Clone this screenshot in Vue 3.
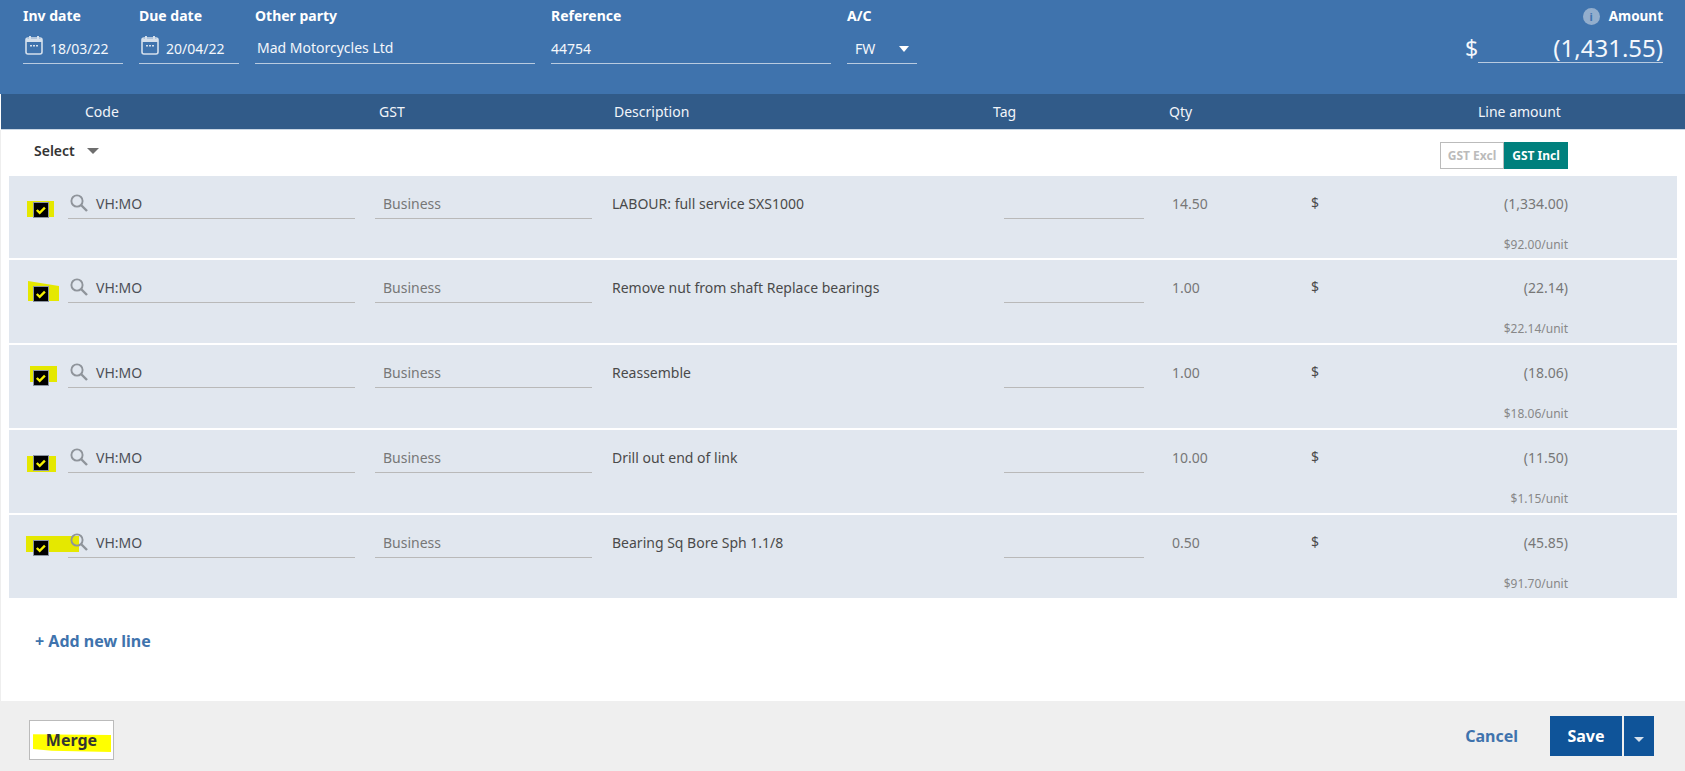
<template>
  <div class="page">
    <header class="top-bar">
      <div class="field date">
        <label>Inv date</label>
        <div class="input">
          <svg class="cal" viewBox="0 0 18 20" width="18" height="20"><path d="M3 3h12a2 2 0 0 1 2 2v12a2 2 0 0 1-2 2H3a2 2 0 0 1-2-2V5a2 2 0 0 1 2-2z" fill="none" stroke="#d5e0ec" stroke-width="1.6"/><path d="M1 4h16v3H1zM4 1h2v4H4zM12 1h2v4h-2z" fill="#d5e0ec"/><path d="M5 10h2v1.5H5zM8 10h2v1.5H8zM11 10h2v1.5h-2z" fill="#d5e0ec"/></svg>
          <span>18/03/22</span>
        </div>
      </div>
      <div class="field date">
        <label>Due date</label>
        <div class="input">
          <svg class="cal" viewBox="0 0 18 20" width="18" height="20"><path d="M3 3h12a2 2 0 0 1 2 2v12a2 2 0 0 1-2 2H3a2 2 0 0 1-2-2V5a2 2 0 0 1 2-2z" fill="none" stroke="#d5e0ec" stroke-width="1.6"/><path d="M1 4h16v3H1zM4 1h2v4H4zM12 1h2v4h-2z" fill="#d5e0ec"/><path d="M5 10h2v1.5H5zM8 10h2v1.5H8zM11 10h2v1.5h-2z" fill="#d5e0ec"/></svg>
          <span>20/04/22</span>
        </div>
      </div>
      <div class="field wide">
        <label>Other party</label>
        <div class="input"><span class="pad">Mad Motorcycles Ltd</span></div>
      </div>
      <div class="field wide">
        <label>Reference</label>
        <div class="input"><span>44754</span></div>
      </div>
      <div class="field ac">
        <label>A/C</label>
        <div class="input ac-input"><span>FW</span><i class="caret white"></i></div>
      </div>
      <div class="amount-field">
        <div class="amount-label"><span class="info">i</span>Amount</div>
        <div class="amount-line">
          <span class="dollar">$</span>
          <span class="amount-value">(1,431.55)</span>
        </div>
      </div>
    </header>

    <div class="col-head">
      <span>Code</span>
      <span>GST</span>
      <span>Description</span>
      <span>Tag</span>
      <span>Qty</span>
      <span class="head-amount">Line amount</span>
    </div>

    <main class="body">
      <div class="tools">
        <div class="select">Select <i class="caret grey"></i></div>
        <div class="gst-toggle">
          <span class="excl">GST Excl</span>
          <span class="incl">GST Incl</span>
        </div>
      </div>

      <div class="rows">
        <div v-for="(line, i) in lines" :key="i" class="row">
          <div class="check-cell">
            <span class="mark" :class="`mark-${i}`"></span>
            <span class="check">
              <svg viewBox="0 0 16 16" width="16" height="16"><path d="M3.8 8l2.9 2.8 5.2-5.2" fill="none" stroke="#f5f000" stroke-width="2.4"/></svg>
            </span>
          </div>
          <div class="cell code-cell">
            <svg class="search" viewBox="0 0 18 18" width="18" height="18"><circle cx="7" cy="7" r="5.6" fill="none" stroke="#8f949b" stroke-width="1.9"/><path d="M11 11l6 6" stroke="#8f949b" stroke-width="2.4"/></svg>
            <span>VH:MO</span>
          </div>
          <div class="cell gst-cell">Business</div>
          <div class="desc">{{ line.desc }}</div>
          <div class="tag-cell"></div>
          <div class="qty">{{ line.qty }}</div>
          <div class="money">
            <div class="money-top"><span class="sign">$</span><span>{{ line.amount }}</span></div>
            <div class="unit">{{ line.unit }}</div>
          </div>
        </div>
      </div>

      <a class="add-line">+ Add new line</a>
    </main>

    <footer class="footer">
      <button class="merge" type="button"><span class="merge-mark"></span><span class="merge-text">Merge</span></button>
      <div class="footer-right">
        <a class="cancel">Cancel</a>
        <button class="save" type="button">Save</button>
        <button class="save-more" type="button"><i class="caret pale"></i></button>
      </div>
    </footer>
  </div>
</template>

<script setup>
const lines = [
  { desc: 'LABOUR: full service SXS1000', qty: '14.50', amount: '(1,334.00)', unit: '$92.00/unit' },
  { desc: 'Remove nut from shaft Replace bearings', qty: '1.00', amount: '(22.14)', unit: '$22.14/unit' },
  { desc: 'Reassemble', qty: '1.00', amount: '(18.06)', unit: '$18.06/unit' },
  { desc: 'Drill out end of link', qty: '10.00', amount: '(11.50)', unit: '$1.15/unit' },
  { desc: 'Bearing Sq Bore Sph 1.1/8', qty: '0.50', amount: '(45.85)', unit: '$91.70/unit' }
]
</script>

<style>
html, body {
  margin: 0;
  background: #fff;
}
</style>

<style scoped>
.page {
  width: 1685px;
  height: 771px;
  display: flex;
  flex-direction: column;
  overflow: hidden;
  font-family: "Noto Sans", "Open Sans", sans-serif;
  font-size: 14px;
  color: #4a4a4a;
}

.top-bar {
  height: 94px;
  box-sizing: border-box;
  flex: none;
  display: flex;
  gap: 16px;
  padding: 6px 22px 0 23px;
  background: #3f73ad;
  color: #fff;
}

.field label {
  display: block;
  height: 20px;
  line-height: 20px;
  font-size: 14px;
  font-weight: 700;
}

.input {
  display: flex;
  align-items: center;
  height: 29px;
  padding-top: 8px;
  border-bottom: 1px solid #b9cbe0;
  font-size: 14px;
  color: #f4f7fb;
}

.date { width: 100px; }
.wide { width: 280px; }
.ac { width: 70px; }

.cal {
  margin: -7px 7px 0 2px;
}

.pad {
  margin-top: -2px;
  padding-left: 2px;
}

.ac-input {
  justify-content: space-between;
  padding: 8px 8px 0 8px;
}

.caret {
  display: inline-block;
  width: 0;
  height: 0;
  border-left: 5px solid transparent;
  border-right: 5px solid transparent;
}
.caret.white { border-top: 6px solid #fff; }
.caret.grey { border-top: 6px solid #6e6e6e; border-left-width: 6.5px; border-right-width: 6.5px; margin-left: 9px; vertical-align: 2px; }
.caret.pale { border-top: 5px solid #d5e0ec; }

.amount-field {
  margin-left: auto;
  width: 198px;
}

.amount-label {
  display: flex;
  align-items: center;
  justify-content: flex-end;
  height: 20px;
  font-size: 13.5px;
  font-weight: 700;
}

.info {
  width: 17px;
  height: 17px;
  margin-right: 9px;
  border-radius: 50%;
  background: #93aecd;
  color: #3f73ad;
  text-align: center;
  font-size: 11px;
  line-height: 17px;
  font-weight: 700;
}

.amount-line {
  display: flex;
  align-items: flex-end;
  height: 37px;
}

.dollar {
  width: 13px;
  font-size: 23px;
  line-height: 44px;
  height: 37px;
  color: #f4f7fb;
}

.amount-value {
  flex: 1;
  height: 33px;
  padding-top: 4px;
  border-bottom: 1px solid #b9cbe0;
  text-align: right;
  font-size: 24px;
  line-height: 38px;
  color: #f4f7fb;
}

.col-head {
  flex: none;
  height: 35px;
  margin-left: 1px;
  display: grid;
  grid-template-columns: 294px 235px 379px 176px 309px 83px;
  padding-left: 84px;
  align-items: center;
  background: #315b89;
  color: #f2f5f9;
  font-size: 14px;
  border-bottom: 1px solid #c9d6e4;
}

.body {
  flex: 1;
  display: flex;
  flex-direction: column;
  padding-left: 8px;
  padding-right: 8px;
  border-left: 1px solid #eee;
}

.tools {
  height: 46px;
  display: flex;
  align-items: flex-start;
  justify-content: space-between;
  padding: 11px 109px 0 25px;
  box-sizing: border-box;
}

.select {
  font-size: 14px;
  font-weight: 600;
  line-height: 20px;
  color: #333;
}

.gst-toggle {
  display: flex;
  height: 27px;
  margin-top: 1px;
  font-size: 12px;
  font-weight: 700;
  line-height: 27px;
}

.excl {
  width: 64px;
  box-sizing: border-box;
  border: 1px solid #bbb;
  line-height: 25px;
  text-align: center;
  color: #bbb;
  background: #fff;
}

.incl {
  width: 64px;
  text-align: center;
  color: #fff;
  background: #00807d;
}

.rows {
  display: flex;
  flex-direction: column;
  gap: 2px;
}

.row {
  position: relative;
  height: 83px;
  display: grid;
  grid-template-columns: 35px 307px 237px 392px 168px 139px 257px;
  padding-left: 24px;
  background: #e1e7ef;
}

.row:first-child {
  height: 82px;
}

.check-cell {
  position: relative;
  padding-top: 25px;
}

.row:nth-child(-n+2) .check-cell {
  padding-top: 26px;
}

.check {
  position: relative;
  display: block;
  width: 16px;
  height: 16px;
  background: #000;
  box-shadow: 0 0 0 1px #8a93a0 inset;
}

.check svg {
  display: block;
}

.mark {
  position: absolute;
  background: #e5e800;
}
.mark-0 { left: -6px; top: 25px; width: 27px; height: 16px; }
.mark-1 { left: -5px; top: 21px; width: 31px; height: 20px; clip-path: polygon(0 0, 100% 25%, 100% 100%, 0 100%); }
.mark-2 { left: -3px; top: 21px; width: 27px; height: 16px; }
.mark-3 { left: -6px; top: 26px; width: 29px; height: 16px; }
.mark-4 { left: -7px; top: 21px; width: 53px; height: 16px; }

.cell {
  display: flex;
  align-items: center;
  height: 30px;
  padding-top: 12px;
  margin-right: 20px;
  border-bottom: 1px solid #b9b9b9;
}

.code-cell {
  position: relative;
  color: #4c4f57;
}

.search {
  margin: -1px 8px 0 2px;
  position: relative;
}

.gst-cell {
  padding-left: 8px;
  margin-right: 0;
  width: 209px;
  color: #777;
}

.tag-cell {
  height: 42px;
  margin-right: 28px;
  border-bottom: 1px solid #b9b9b9;
}

.desc,
.qty,
.money-top {
  padding-top: 18px;
  line-height: 20px;
}

.qty {
  color: #777;
}

.money-top {
  display: flex;
  justify-content: space-between;
  color: #777;
}

.sign {
  margin-top: -1px;
  color: #4a4a4a;
  font-size: 14px;
}

.unit {
  margin-top: 23px;
  text-align: right;
  font-size: 12px;
  line-height: 16px;
  color: #888;
}

.add-line {
  margin: 32px 0 0 26px;
  font-size: 16px;
  font-weight: 700;
  line-height: 22px;
  color: #3f73ad;
}

.footer {
  flex: none;
  height: 70px;
  display: flex;
  align-items: flex-start;
  justify-content: space-between;
  padding: 0 31px 0 29px;
  background: #efefef;
}

.merge {
  position: relative;
  width: 85px;
  height: 40px;
  margin-top: 19px;
  padding: 0;
  border: 1px solid #bbb;
  background: #fff;
  font-family: inherit;
  font-size: 16px;
  font-weight: 700;
  color: #333;
}

.merge-mark {
  position: absolute;
  left: 3px;
  top: 12px;
  width: 78px;
  height: 19px;
  background: #ffff00;
  clip-path: polygon(0 6%, 100% 10%, 100% 100%, 24% 94%, 0 84%);
}

.merge-text {
  position: relative;
}

.footer-right {
  display: flex;
  align-items: center;
  margin-top: 15px;
  height: 40px;
}

.cancel {
  margin-right: 32px;
  font-size: 16px;
  font-weight: 700;
  color: #3f73ad;
}

.save,
.save-more {
  height: 40px;
  padding: 0;
  border: none;
  background: #0f5499;
  color: #fff;
  font-family: inherit;
  font-size: 16px;
  font-weight: 700;
}

.save {
  width: 72px;
}

.save-more {
  width: 30px;
  margin-left: 2px;
}
</style>
